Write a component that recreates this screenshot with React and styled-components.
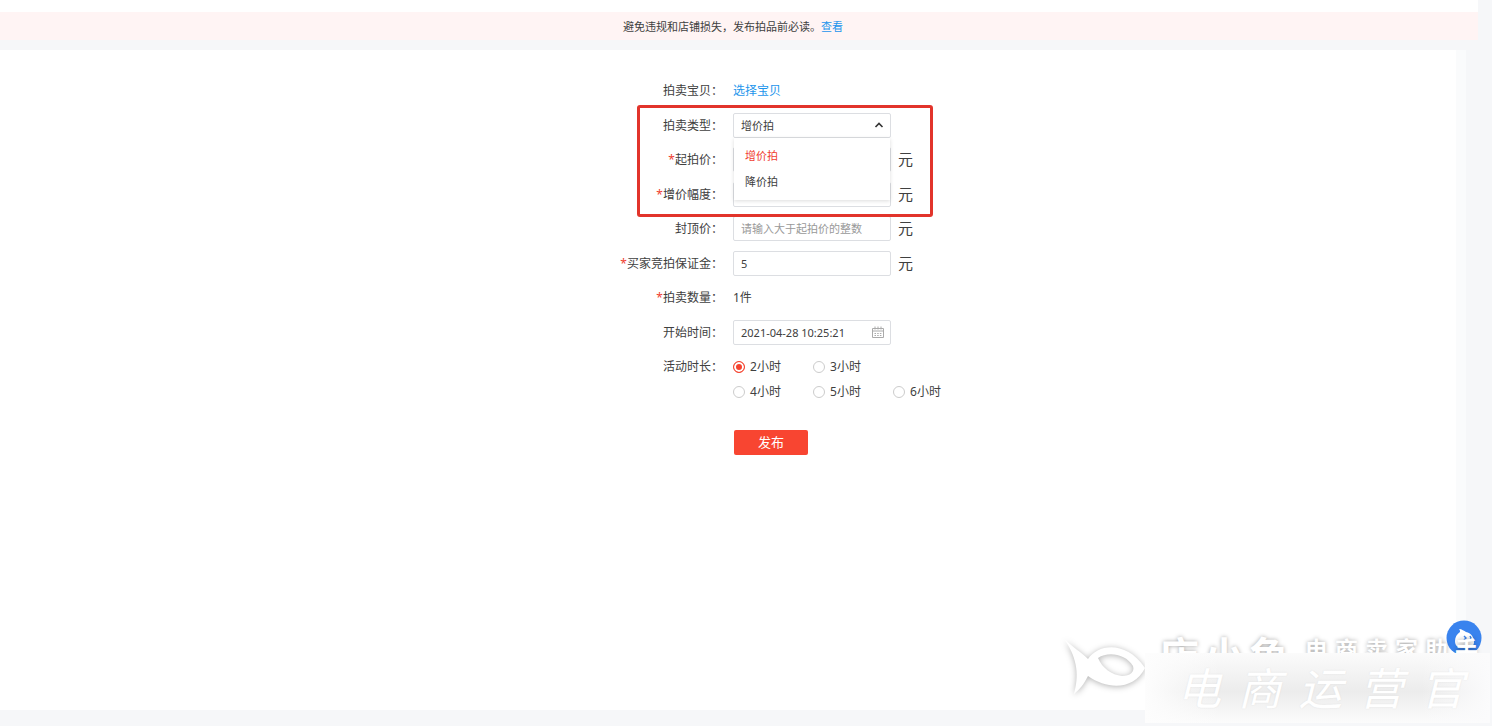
import React from "react";
import styled, { createGlobalStyle, css } from "styled-components";

const GlobalStyle = createGlobalStyle`
  *, *::before, *::after { box-sizing: border-box; }
  body {
    margin: 0;
    background: #f6f7f9;
    color: #404040;
    font-family: "Noto Sans", "Noto Sans CJK SC", sans-serif;
    font-size: 12px;
    line-height: 24px;
  }
  button, input, select { font: inherit; color: inherit; }
`;

const Page = styled.div`
  position: relative;
  display: flex;
  flex-direction: column;
  min-height: 100vh;
  padding-bottom: 16px;
  overflow: hidden;
`;

const TopStrip = styled.header`
  height: 12px;
  margin-right: 14px;
  background: #fff;
`;

const Notice = styled.p`
  margin: 0 14px 10px 0;
  padding: 3px 12px 1px 0;
  background: #fff4f4;
  text-align: center;
  font-size: 11px;
`;

const Link = styled.a`
  color: #1c95ec;
  text-decoration: none;
`;

const Card = styled.main`
  flex: 1;
  margin-right: 26px;
  padding-top: 28px;
  border-right: 10px solid #fafbfc;
  background: #fff;
`;

const Rows = styled.div`
  display: flex;
  flex-direction: column;
  justify-content: space-between;
  min-height: 326px;
`;

const Row = styled.div`
  display: grid;
  grid-template-columns: 1fr 1fr;
  column-gap: 10px;
  align-items: start;
  line-height: 25px;
`;

const labelStyle = css`
  text-align: right;
  white-space: nowrap;
`;

const Label = styled.label`
  ${labelStyle}
`;

const Caption = styled.span`
  ${labelStyle}
`;

const Star = styled.span`
  color: #f0402f;
`;

const Control = styled.div`
  position: relative;
  display: flex;
  align-items: center;
  gap: 7px;
  min-height: 25px;
`;

const Field = styled.div`
  position: relative;
  width: 158px;
  height: 25px;

  svg {
    position: absolute;
    top: 6px;
    right: 6px;
    pointer-events: none;
  }
`;

const fieldBox = css`
  display: block;
  width: 100%;
  height: 25px;
  padding: 0 7px;
  border: 1px solid #dcdee2;
  border-radius: 2px;
  outline: 0;
  background: #fff;
  font-size: 11px;
  line-height: 23px;
`;

const TextInput = styled.input`
  ${fieldBox}
  &::placeholder { color: #999; opacity: 1; }
`;

const Select = styled.select`
  ${fieldBox}
  appearance: none;
`;

const Unit = styled.span`
  font-size: 15px;
`;

const Menu = styled.ul`
  position: absolute;
  z-index: 2;
  top: 25px;
  left: 1px;
  width: 156px;
  margin: 0;
  padding: 5px 0;
  list-style: none;
  background: #fff;
  box-shadow: 0 1px 4px rgba(0, 0, 0, 0.14);
  font-size: 11px;
`;

const Option = styled.li`
  padding: 0 11px;
  line-height: 26px;
  color: ${({ $active }) => ($active ? "#f0402f" : "#404040")};
`;

const Highlight = styled.div`
  position: absolute;
  z-index: 3;
  top: -8px;
  left: -96px;
  width: 296px;
  height: 112px;
  border: 3px solid #e2342b;
  border-radius: 3px;
  pointer-events: none;
`;

const Radios = styled.div`
  display: grid;
  grid-template-columns: repeat(3, 80px);
  grid-auto-rows: 25px;
`;

const RadioLabel = styled.label`
  display: flex;
  align-items: center;
  gap: 5px;
  grid-column: ${({ $first }) => ($first ? 1 : "auto")};
`;

const Radio = styled.input`
  appearance: none;
  width: 12px;
  height: 12px;
  margin: 0;
  border: 1px solid #ccc;
  border-radius: 50%;
  background: #fff;

  &:checked {
    border-color: #f5432f;
    background: #f5432f;
    box-shadow: inset 0 0 0 2px #fff;
  }
`;

const Submit = styled.button`
  width: 74px;
  height: 25px;
  padding: 0;
  border: 0;
  border-radius: 2px;
  background: #f84531;
  color: #fff;
  font-size: 13px;
  line-height: 25px;
`;

const Actions = styled(Row)`
  margin-top: 26px;
  justify-items: start;

  ${Submit} { grid-column: 2; margin-left: 1px; }
`;

const Mark = styled.aside`
  position: absolute;
  right: 0;
  bottom: 0;
  width: 432px;
  height: 108px;
  overflow: hidden;
  pointer-events: none;
`;

const FishLogo = styled.svg`
  position: absolute;
  top: 16px;
  left: 0;
  filter: drop-shadow(0 1px 3px rgba(0, 0, 0, 0.3));
`;

const Helper = styled.svg`
  position: absolute;
  top: 2px;
  right: 10px;
`;

const Brand = styled.div`
  position: absolute;
  top: 14px;
  left: 92px;
  display: flex;
  align-items: flex-start;
  gap: 16px;
  width: 340px;
  height: 22px;
  padding: 4px 0 0 7px;
  overflow: hidden;
  color: #fff;
  font-weight: 700;
  white-space: nowrap;
  text-shadow: 0 0 4px rgba(0, 0, 0, 0.35);
`;

const BrandName = styled.span`
  display: flex;
  gap: 5px;
  font-size: 40px;
  line-height: 40px;
`;

const BrandTag = styled.span`
  display: flex;
  gap: 7px;
  font-size: 23px;
  line-height: 26px;
`;

const Signature = styled.div`
  position: absolute;
  right: 2px;
  bottom: 3px;
  display: flex;
  justify-content: space-between;
  width: 345px;
  height: 70px;
  padding: 0 26px 0 32px;
  background:
    linear-gradient(90deg, #fdfdfd, transparent 22%, transparent 80%, #fbfbfc),
    linear-gradient(180deg, #fbfbfb, #ececec 55%, #fcfcfc);
  color: #fff;
  font-size: 44px;
  font-style: italic;
  line-height: 70px;
  text-shadow: 0 0 2px rgba(0, 0, 0, 0.08);
`;

const CaretUp = () => (
  <svg width="12" height="12" viewBox="0 0 12 12" fill="none" stroke="#333" strokeWidth="1.6">
    <path d="M2.5 8 L6 4.5 L9.5 8" />
  </svg>
);

const Calendar = () => (
  <svg width="14" height="13" viewBox="0 0 14 13" fill="none" stroke="#aaa">
    <path d="M1.5 2.5h11v9h-11zM1.5 5h11M4 .5v3M7 .5v3M10 .5v3" />
    <path d="M3.5 7.5h7M3.5 9.5h7" strokeDasharray="1.5 1.2" />
  </svg>
);

const priceFields = [
  { id: "start", label: "起拍价", required: true },
  { id: "step", label: "增价幅度", required: true },
  { id: "cap", label: "封顶价", placeholder: "请输入大于起拍价的整数" },
  { id: "deposit", label: "买家竞拍保证金", required: true, value: "5" },
];

export default function App() {
  return (
    <Page>
      <GlobalStyle />
      <TopStrip />
      <Notice>
        避免违规和店铺损失，发布拍品前必读。<Link href="#rules">查看</Link>
      </Notice>
      <Card>
        <form onSubmit={(e) => e.preventDefault()}>
          <Rows>
            <Row>
              <Caption>拍卖宝贝：</Caption>
              <Control>
                <Link href="#items">选择宝贝</Link>
              </Control>
            </Row>
            <Row>
              <Label htmlFor="type">拍卖类型：</Label>
              <Control>
                <Field>
                  <Select id="type" defaultValue="增价拍">
                    <option>增价拍</option>
                    <option>降价拍</option>
                  </Select>
                  <CaretUp />
                  <Menu role="listbox" aria-label="拍卖类型">
                    <Option role="option" aria-selected="true" $active>增价拍</Option>
                    <Option role="option" aria-selected="false">降价拍</Option>
                  </Menu>
                </Field>
                <Highlight />
              </Control>
            </Row>
            {priceFields.map((f) => (
              <Row key={f.id}>
                <Label htmlFor={f.id}>
                  {f.required && <Star>*</Star>}
                  {f.label}：
                </Label>
                <Control>
                  <Field>
                    <TextInput id={f.id} defaultValue={f.value} placeholder={f.placeholder} />
                  </Field>
                  <Unit>元</Unit>
                </Control>
              </Row>
            ))}
            <Row>
              <Caption>
                <Star>*</Star>拍卖数量：
              </Caption>
              <Control>1件</Control>
            </Row>
            <Row>
              <Label htmlFor="time">开始时间：</Label>
              <Control>
                <Field>
                  <TextInput id="time" defaultValue="2021-04-28 10:25:21" />
                  <Calendar />
                </Field>
              </Control>
            </Row>
            <Row>
              <Caption id="duration">活动时长：</Caption>
              <Radios role="radiogroup" aria-labelledby="duration">
                {[2, 3, 4, 5, 6].map((h) => (
                  <RadioLabel key={h} $first={h === 4}>
                    <Radio type="radio" name="hours" value={h} defaultChecked={h === 2} />
                    {h}小时
                  </RadioLabel>
                ))}
              </Radios>
            </Row>
          </Rows>
          <Actions>
            <Submit type="submit">发布</Submit>
          </Actions>
        </form>
      </Card>
      <Mark>
        <FishLogo width="90" height="72" viewBox="0 0 90 72" fill="#fff">
          <path
            fillRule="evenodd"
            d="M5 6C14 14 21 18 28 25C38 10 66 6 85 34C74 56 48 56 28 42C24 50 20 55 14 60C19 42 18 26 5 6ZM38 24C48 17 66 20 73 32C75 38 70 42 62 42C52 41 42 34 38 24Z"
          />
        </FishLogo>
        <Helper width="36" height="36" viewBox="0 0 36 36">
          <circle cx="18" cy="18" r="17.5" fill="#3983ee" />
          <path
            fill="#fff"
            d="M13 9C16 9 18 11 20 12C25 13 28 17 28 22C28 26 25 28 18 28C12 28 9 26 9 21C9 17 11 14 14 12C14 11 14 10 13 9Z"
          />
          <path d="M18 16l2 2-2 2M24 16l1 2-1 2" fill="none" stroke="#3983ee" strokeWidth="1.4" />
        </Helper>
        <Brand>
          <BrandName>
            {[..."店小鱼"].map((c) => (
              <span key={c}>{c}</span>
            ))}
          </BrandName>
          <BrandTag>
            {[..."电商卖家助手"].map((c) => (
              <span key={c}>{c}</span>
            ))}
          </BrandTag>
        </Brand>
        <Signature>
          {[..."电商运营官"].map((c) => (
            <span key={c}>{c}</span>
          ))}
        </Signature>
      </Mark>
    </Page>
  );
}
